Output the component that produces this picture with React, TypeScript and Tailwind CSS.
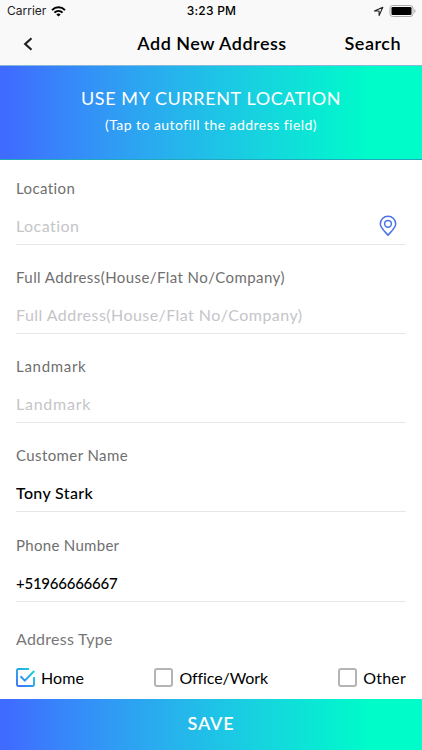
import { useState } from "react";

type FieldProps = {
  label: string;
  labelClass: string;
  placeholder?: string;
  value?: string;
  inputClass: string;
  withPin?: boolean;
};

const PinIcon = () => (
  <svg width="18" height="22" viewBox="0 0 18 22" fill="none" stroke="#4b74e8" strokeWidth="1.5">
    <path d="M9 20.3C6.4 17 1.3 12.6 1.3 8.9a7.7 7.7 0 0 1 15.4 0C16.7 12.6 11.6 17 9 20.3Z" strokeLinejoin="round" />
    <circle cx="9" cy="8.8" r="3.4" />
  </svg>
);

const WifiIcon = () => (
  <svg width="15" height="11" viewBox="0 0 15 11" fill="none" stroke="#000" strokeWidth="2">
    <path d="M1 4.1C4.7 .4 10.3 .4 14 4.1" />
    <path d="M3.4 6.6C5.8 4.3 9.2 4.3 11.6 6.6" />
    <path d="M7.5 10.6 5.3 8.4C6.5 7.2 8.5 7.2 9.7 8.4Z" fill="#000" stroke="none" />
  </svg>
);

const CheckedBox = () => (
  <svg width="19" height="19" viewBox="0 0 19 19" fill="none">
    <defs>
      <linearGradient id="check" x1="0" y1="19" x2="19" y2="0" gradientUnits="userSpaceOnUse">
        <stop stopColor="#3f6cff" />
        <stop offset="0.5" stopColor="#29a3e6" />
        <stop offset="1" stopColor="#14e0d0" />
      </linearGradient>
    </defs>
    <path d="M13 1H2.2Q1 1 1 2.2V16.8Q1 18 2.2 18H16.8Q18 18 18 16.8V9" stroke="url(#check)" strokeWidth="1.9" />
    <path d="M4.5 8.3 8.8 12.6 18.2 3" stroke="url(#check)" strokeWidth="2" />
  </svg>
);

const Field = ({ label, labelClass, placeholder, value, inputClass, withPin }: FieldProps) => (
  <div className="mb-[22.25px]">
    <label className={`block h-5 text-[15px] leading-5 text-[#6f6f6f] ${labelClass}`}>{label}</label>
    <div className="flex h-[47px] items-center border-b border-[#e6e6e6] pt-2.5">
      <input
        className={`h-6 min-w-0 flex-1 bg-transparent text-black outline-none placeholder:text-[#c5c5c9] ${inputClass}`}
        placeholder={placeholder}
        defaultValue={value}
      />
      {withPin && (
        <span className="mr-[9px]">
          <PinIcon />
        </span>
      )}
    </div>
  </div>
);

const types = [
  { name: "Home", style: "tracking-[0.1px]" },
  { name: "Office/Work", style: "tracking-[-0.1px]" },
  { name: "Other", style: "tracking-[0.2px]" },
];

const App = () => {
  const [selected, setSelected] = useState("Home");

  return (
    <div className="flex h-[750px] w-[422px] flex-col overflow-hidden bg-white font-['Lato',sans-serif]">
      <header className="h-[66px] border-b border-[#88b8d8] bg-[#f9f9f9]">
        {/* Status bar */}
        <div className="grid h-[22px] grid-cols-3 items-center pl-[7px] pr-[6px] font-['Inter',sans-serif] text-[12px] text-black">
          <div className="flex items-center gap-[5px]">
            <span className="text-[#222]">Carrier</span>
            <WifiIcon />
          </div>
          <span className="text-center font-medium tracking-[0.25px]">3:23 PM</span>
          <div className="flex items-center justify-end gap-[5px]">
            <svg width="11" height="11" viewBox="0 0 11 11" fill="none" stroke="#222" strokeWidth="1.1">
              <path d="M9.8 1.2 6.1 9.6V5H1.4Z" strokeLinejoin="round" />
            </svg>
            <svg width="27" height="12" viewBox="0 0 27 12">
              <rect x="1" y=".5" width="23" height="11" rx="2.8" fill="none" stroke="#aaa" />
              <rect x="2.5" y="2" width="20" height="8" rx="1.3" />
              <path d="M25.3 4v4q1.3-.7 1.3-2t-1.3-2Z" fill="#aaa" />
            </svg>
          </div>
        </div>

        {/* Title bar */}
        <div className="grid h-[43px] grid-cols-[1fr_auto_1fr] items-center pl-[23px] pr-[21px] text-[18px] font-semibold tracking-[0.5px] text-black">
          <button aria-label="Back">
            <svg width="10" height="14" viewBox="0 0 10 14" fill="none" stroke="#222" strokeWidth="2.2">
              <path d="M8.5 1.2 2.2 7 8.5 12.8" />
            </svg>
          </button>
          <h1>Add New Address</h1>
          <button className="text-right">Search</button>
        </div>
      </header>

      <button className="flex h-[94px] shrink-0 flex-col items-center border-b border-[#20a9bd] bg-linear-to-r from-[#3f6cff] from-2% to-[#00fcc8] to-88% pt-5 text-white">
        <span className="text-[18px] leading-6 tracking-[0.6px]">USE MY CURRENT LOCATION</span>
        <span className="mt-[5px] text-[14px] leading-5 tracking-[0.45px]">(Tap to autofill the address field)</span>
      </button>

      <main className="flex-1 px-4 pt-[17.5px]">
        <Field label="Location" labelClass="tracking-[0.4px]" placeholder="Location" inputClass="text-[16px] tracking-[0.45px]" withPin />
        <Field
          label="Full Address(House/Flat No/Company)"
          labelClass="tracking-[0.43px]"
          placeholder="Full Address(House/Flat No/Company)"
          inputClass="text-[16px] tracking-[0.45px]"
        />
        <Field label="Landmark" labelClass="tracking-[0.7px]" placeholder="Landmark" inputClass="text-[16px] tracking-[0.75px]" />
        <Field label="Customer Name" labelClass="tracking-[0.4px]" value="Tony Stark" inputClass="text-[16px] font-medium tracking-[0.35px]" />
        <Field label="Phone Number" labelClass="tracking-[0.3px]" value="+51966666667" inputClass="text-[15px] font-medium tracking-[-0.25px]" />

        <p className="mt-[27px] h-5 text-[16px] leading-5 tracking-[0.25px] text-[#777]">Address Type</p>
        <div className="mt-[17px] flex justify-between">
          {types.map((type) => (
            <button
              key={type.name}
              className="flex h-6 items-center gap-1.5 text-[16px] text-black"
              onClick={() => setSelected(type.name)}
            >
              {selected === type.name ? (
                <CheckedBox />
              ) : (
                <span className="size-[19px] rounded-[3px] border-2 border-[#b4b4b4]" />
              )}
              <span className={type.style}>{type.name}</span>
            </button>
          ))}
        </div>
      </main>

      <button className="h-[51px] shrink-0 bg-linear-to-r from-[#3f6cff] from-2% to-[#00fcc8] to-88% pb-[3px] text-[18px] font-semibold tracking-[0.8px] text-white">
        SAVE
      </button>
    </div>
  );
};

export default App;
